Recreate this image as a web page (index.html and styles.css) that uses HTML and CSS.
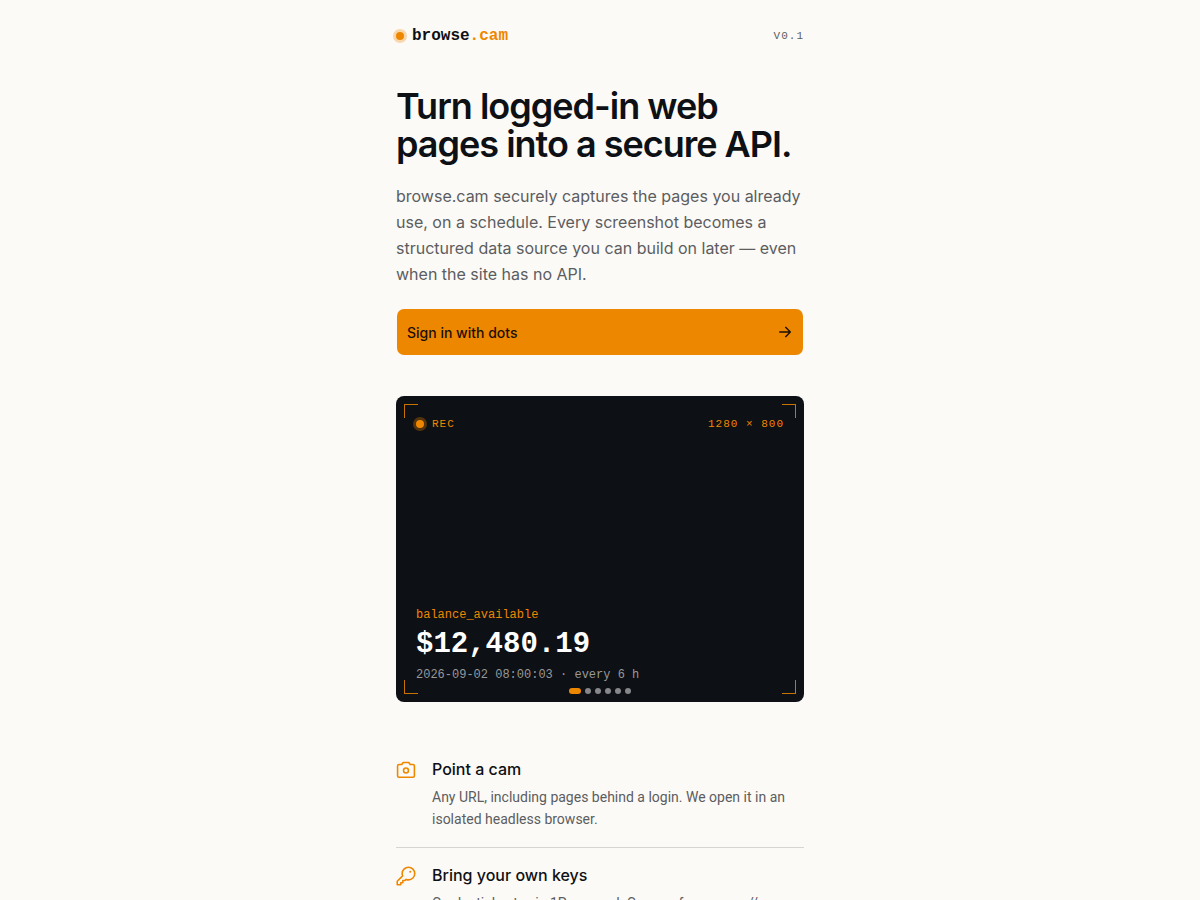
FILE: index.html
```
<!DOCTYPE html>
<html lang="en">
<head>
    <meta charset="UTF-8">
    <meta name="viewport" content="width=device-width, initial-scale=1.0">
    <title>browse.cam</title>
    <link rel="stylesheet" href="styles.css">
</head>
<body>
    <div class="page">
        <header class="topbar">
            <a class="brand" href="#"><span class="dot"></span><span>browse<span class="accent">.cam</span></span></a>
            <span class="version">v0.1</span>
        </header>

        <main>
            <section class="hero">
                <h1>Turn logged-in web pages into a secure API.</h1>
                <p>browse.cam securely captures the pages you already use, on a schedule. Every screenshot becomes a structured data source you can build on later — even when the site has no API.</p>
                <button type="button" class="signin">
                    Sign in with dots
                    <svg class="arrow" viewBox="0 0 24 24" aria-hidden="true"><path d="M4 12h16M13 5l7 7-7 7"/></svg>
                </button>
            </section>

            <section class="viewfinder" aria-label="Latest capture">
                <span class="corner top-left"></span>
                <span class="corner top-right"></span>
                <span class="corner bottom-left"></span>
                <span class="corner bottom-right"></span>
                <div class="status">
                    <span class="rec"><span class="dot"></span>REC</span>
                    <span>1280 × 800</span>
                </div>
                <div class="capture">
                    <div class="field">balance_available</div>
                    <div class="amount">$12,480.19</div>
                    <div class="stamp">2026-09-02 08:00:03 · every 6 h</div>
                </div>
                <div class="slides">
                    <span class="slide active"></span>
                    <span class="slide"></span>
                    <span class="slide"></span>
                    <span class="slide"></span>
                    <span class="slide"></span>
                    <span class="slide"></span>
                </div>
            </section>

            <ul class="features">
                <li class="feature">
                    <svg class="icon" viewBox="14 12 228 228" aria-hidden="true">
                        <path d="M208 208H48a16 16 0 0 1-16-16V80a16 16 0 0 1 16-16h32l16-24h64l16 24h32a16 16 0 0 1 16 16v112a16 16 0 0 1-16 16Z"/>
                        <circle cx="128" cy="132" r="28"/>
                    </svg>
                    <div>
                        <h2>Point a cam</h2>
                        <p>Any URL, including pages behind a login. We open it in an isolated headless browser.</p>
                    </div>
                </li>
                <li class="feature">
                    <svg class="icon" viewBox="18 10 228 228" aria-hidden="true">
                        <path d="M93.200 122.800A70.300 70.300 0 0 1 88 96a72 72 0 1 1 72 72 70.300 70.300 0 0 1-26.800-5.200L120 176H96v24H72v24H32v-40Z"/>
                        <circle class="keyhole" cx="180" cy="76" r="12"/>
                    </svg>
                    <div>
                        <h2>Bring your own keys</h2>
                        <p>Credentials stay in 1Password. Cams reference op:// addresses.</p>
                    </div>
                </li>
            </ul>
        </main>
    </div>
</body>
</html>
```
FILE: styles.css
```
:root {
    --bg: #fcfaf6;
    --ink: #0d1014;
    --muted: #5b5d61;
    --accent: #ee8700;
    --line: #d6d5d2;
    --sans: Inter, "Liberation Sans", sans-serif;
    --mono: "Liberation Mono", monospace;
}

* {
    box-sizing: border-box;
}

body {
    margin: 0;
    background-color: var(--bg);
    color: var(--ink);
    font-family: var(--sans);
    font-size: 16px;
}

h1, h2, p, ul {
    margin: 0;
    padding: 0;
}

.page {
    max-width: 448px;
    margin: 0 auto;
    padding: 24px 20px;
}

.topbar {
    display: flex;
    align-items: center;
    justify-content: space-between;
    height: 24px;
    margin-bottom: 39px;
}

.brand {
    display: flex;
    align-items: center;
    gap: 8px;
    color: inherit;
    font-family: var(--mono);
    font-weight: 700;
    text-decoration: none;
}

.accent {
    color: var(--accent);
}

.dot {
    width: 8px;
    height: 8px;
    border-radius: 50%;
    background-color: var(--accent);
    box-shadow: 0 0 0 3px rgba(238, 135, 0, 0.3);
}

.version {
    color: var(--muted);
    font-family: var(--mono);
    font-size: 11px;
    letter-spacing: 1px;
    text-transform: uppercase;
}

.hero h1 {
    font-size: 36px;
    font-weight: 600;
    line-height: 38px;
    letter-spacing: -1px;
}

.hero p {
    margin: 20px 0 21px;
    color: var(--muted);
    line-height: 26px;
}

.signin {
    display: flex;
    align-items: center;
    justify-content: space-between;
    width: 100%;
    height: 48px;
    padding: 0 10px;
    border: 1px solid transparent;
    border-radius: 8px;
    background-color: var(--accent);
    background-clip: padding-box;
    color: #1c0f05;
    font-family: inherit;
    font-size: 14px;
    font-weight: 500;
    cursor: pointer;
}

.arrow {
    width: 16px;
    height: 16px;
    fill: none;
    stroke: currentColor;
    stroke-width: 2;
    stroke-linecap: round;
    stroke-linejoin: round;
}

.viewfinder {
    position: relative;
    display: flex;
    flex-direction: column;
    justify-content: space-between;
    aspect-ratio: 4 / 3;
    margin-top: 40px;
    padding: 20px 20px 19px;
    border-radius: 8px;
    background-color: #0d1014;
    font-family: var(--mono);
}

.corner {
    position: absolute;
    width: 14px;
    height: 14px;
    border: 0 solid #c97303;
}

.top-left {
    top: 8px;
    left: 8px;
    border-width: 1px 0 0 1px;
}

.top-right {
    top: 8px;
    right: 8px;
    border-width: 1px 1px 0 0;
}

.bottom-left {
    bottom: 8px;
    left: 8px;
    border-width: 0 0 1px 1px;
}

.bottom-right {
    right: 8px;
    bottom: 8px;
    border-width: 0 1px 1px 0;
}

.status {
    display: flex;
    justify-content: space-between;
    color: var(--accent);
    font-size: 11px;
    line-height: 16px;
    letter-spacing: 1px;
}

.rec {
    display: flex;
    align-items: center;
    gap: 8px;
}

.field {
    color: var(--accent);
    font-size: 12px;
    line-height: 16px;
}

.amount {
    margin: 4px 0;
    color: #fff;
    font-size: 29px;
    font-weight: 700;
    line-height: 36px;
}

.stamp {
    color: #97989a;
    font-size: 12px;
    line-height: 16px;
}

.slides {
    position: absolute;
    right: 0;
    bottom: 8px;
    left: 0;
    display: flex;
    justify-content: center;
    gap: 4px;
}

.slide {
    width: 6px;
    height: 6px;
    border-radius: 3px;
    background-color: #86878a;
}

.slide.active {
    width: 12px;
    background-color: var(--accent);
}

.features {
    margin-top: 40px;
    list-style: none;
}

.feature {
    display: flex;
    gap: 16px;
    padding: 16px 0 17px;
}

.feature + .feature {
    border-top: 1px solid var(--line);
}

.icon {
    flex: none;
    width: 20px;
    height: 20px;
    margin-top: 2px;
    fill: none;
    stroke: var(--accent);
    stroke-width: 18;
    stroke-linecap: round;
    stroke-linejoin: round;
}

.keyhole {
    fill: var(--accent);
    stroke: none;
}

.feature h2 {
    margin-bottom: 6px;
    font-size: 16px;
    font-weight: 500;
    line-height: 22px;
}

/* narrower face keeps the descriptions to two lines */
.feature p {
    color: var(--muted);
    font-family: Roboto, var(--sans);
    font-size: 14px;
    line-height: 22px;
}
```
